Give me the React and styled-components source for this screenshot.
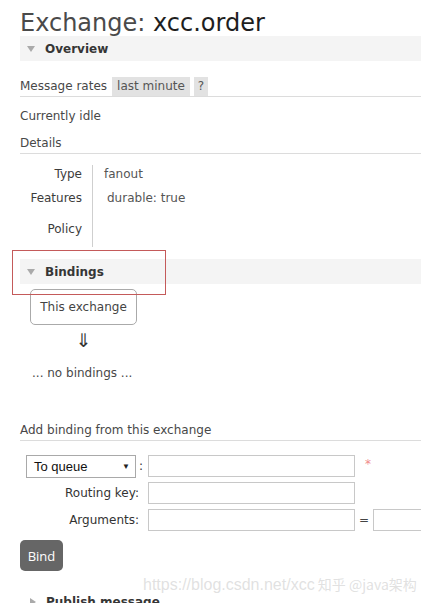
import React from "react"
import styled, { createGlobalStyle } from "styled-components"

const GlobalStyle = createGlobalStyle`
  html, body {
    margin: 0;
    padding: 0;
    background: #fff;
  }
  body {
    font-family: "DejaVu Sans", Verdana, sans-serif;
    font-size: 12px;
    color: #484848;
  }
  * {
    box-sizing: border-box;
  }
`

const App = () => {
  return (
    <>
      <GlobalStyle />
      <Page>
        <Title>
          <TitleLabel>Exchange:</TitleLabel> xcc.order
        </Title>

        <SectionHeader>
          <Triangle open />
          Overview
        </SectionHeader>

        <RatesRow>
          Message rates
          <Tag>last minute</Tag>
          <Tag narrow>?</Tag>
        </RatesRow>
        <Line>Currently idle</Line>
        <SubHeading>Details</SubHeading>

        <DetailsTable>
          <DetailRow $pad="1px 0 3px">
            <DetailLabel>Type</DetailLabel>
            <DetailValue>fanout</DetailValue>
          </DetailRow>
          <DetailRow $pad="5px 0 8px">
            <DetailLabel>Features</DetailLabel>
            <DetailValue $indent="14px">durable: true</DetailValue>
          </DetailRow>
          <DetailRow $pad="7px 0 10px">
            <DetailLabel>Policy</DetailLabel>
            <DetailValue />
          </DetailRow>
        </DetailsTable>

        <HighlightWrap>
          <SectionHeader>
            <Triangle open />
            Bindings
          </SectionHeader>
          <Highlight />
        </HighlightWrap>

        <ExchangeBox>This exchange</ExchangeBox>
        <Arrow>⇓</Arrow>
        <NoBindings>... no bindings ...</NoBindings>

        <SubHeading $top="37px">Add binding from this exchange</SubHeading>

        <Form>
          <FormRow>
            <FormLabel>
              <Select>
                To queue
                <SelectArrow>▼</SelectArrow>
              </Select>
              <Colon>:</Colon>
            </FormLabel>
            <Input />
            <Required>*</Required>
          </FormRow>
          <FormRow>
            <FormLabel>Routing key:</FormLabel>
            <Input />
          </FormRow>
          <FormRow>
            <FormLabel>Arguments:</FormLabel>
            <Input />
            <Equals>=</Equals>
            <Input $small />
          </FormRow>
        </Form>

        <BindButton>Bind</BindButton>

        <SectionHeader $top="18px" $plain>
          <Triangle />
          Publish message
        </SectionHeader>

        <Watermark>
          https://blog.csdn.net/xcc<WatermarkCjk> 知乎 @java架构</WatermarkCjk>
        </Watermark>
      </Page>
    </>
  )
}

export default App

const Page = styled.div`
  position: relative;
  height: 603px;
  overflow: hidden;
  padding-left: 20px;
`

const Title = styled.h1`
  margin: 0;
  padding-top: 10px;
  height: 36px;
  font-size: 24px;
  line-height: 26px;
  font-weight: normal;
  color: #1e1e1e;
  white-space: nowrap;
`

const TitleLabel = styled.span`
  color: #4a4a4a;
`

const SectionHeader = styled.div`
  display: flex;
  align-items: center;
  height: 25px;
  margin-top: ${(p) => p.$top || "0"};
  padding-left: 7px;
  background: ${(p) => (p.$plain ? "#fff" : "#f4f4f4")};
  font-weight: bold;
  color: #363636;
  white-space: nowrap;
`

const Triangle = styled.span`
  display: inline-block;
  width: 0;
  height: 0;
  margin-right: 10px;
  margin-left: ${(p) => (p.open ? "0" : "3px")};
  border-style: solid;
  border-color: transparent;
  ${(p) =>
    p.open
      ? `
    border-width: 6px 4px 0 4px;
    border-top-color: #aaa;
  `
      : `
    border-width: 4px 0 4px 6px;
    border-left-color: #aaa;
  `}
`

const RatesRow = styled.div`
  display: flex;
  align-items: stretch;
  margin-top: 16px;
  height: 20px;
  line-height: 19px;
  border-bottom: 1px solid #dcdcdc;
  white-space: nowrap;
`

const Tag = styled.span`
  margin-left: ${(p) => (p.narrow ? "4px" : "5px")};
  padding: 0 ${(p) => (p.narrow ? "4px" : "5px")};
  height: 19px;
  background: #e2e2e2;
  color: #555;
`

const Line = styled.div`
  margin-top: 9px;
  line-height: 20px;
`

const SubHeading = styled.div`
  margin-top: ${(p) => p.$top || "7px"};
  height: 21px;
  line-height: 20px;
  border-bottom: 1px solid #dcdcdc;
  white-space: nowrap;
`

const DetailsTable = styled.div`
  margin-top: 11px;
`

const DetailRow = styled.div`
  display: grid;
  grid-template-columns: 73px 1fr;
  line-height: 16px;

  & > * {
    padding: ${(p) => p.$pad};
  }
`

const DetailLabel = styled.div`
  padding-right: 10px !important;
  text-align: right;
  border-right: 1px solid #cfcfcf;
  color: #3c3c3c;
`

const DetailValue = styled.div`
  padding-left: ${(p) => p.$indent || "11px"} !important;
  color: #555;
`

const HighlightWrap = styled.div`
  position: relative;
  margin-top: 12px;
`

const Highlight = styled.div`
  position: absolute;
  left: -8px;
  top: -9px;
  width: 154px;
  height: 45px;
  border: 1px solid #c45a5a;
  pointer-events: none;
`

const ExchangeBox = styled.div`
  margin: 5px 0 0 10px;
  width: 107px;
  height: 36px;
  line-height: 34px;
  border: 1px solid #aaa;
  border-radius: 5px;
  text-align: center;
  color: #444;
`

const Arrow = styled.div`
  margin: 5px 0 0 10px;
  width: 107px;
  line-height: 20px;
  font-size: 19px;
  text-align: center;
  color: #333;
`

const NoBindings = styled.div`
  margin: 13px 0 0 12px;
  line-height: 20px;
`

const Form = styled.div`
  display: flex;
  flex-direction: column;
  gap: 5px;
  margin-top: 14px;
`

const FormRow = styled.div`
  display: flex;
  align-items: center;
  height: 22px;
  white-space: nowrap;
`

const FormLabel = styled.div`
  flex: none;
  display: flex;
  align-items: center;
  justify-content: flex-end;
  width: 128px;
  padding-right: 9px;
  color: #333;
`

const Select = styled.div`
  display: flex;
  align-items: center;
  justify-content: space-between;
  width: 110px;
  height: 23px;
  padding: 0 5px 0 7px;
  border: 1px solid #a9a9a9;
  font-family: "Liberation Sans", Arial, sans-serif;
  font-size: 13px;
  color: #111;
`

const SelectArrow = styled.span`
  font-size: 8px;
  color: #222;
`

const Colon = styled.span`
  margin-left: 3px;
  margin-right: -4px;
`

const Input = styled.div`
  flex: none;
  width: ${(p) => (p.$small ? "60px" : "207px")};
  height: 22px;
  border: 1px solid #c8c8c8;
  background: #fff;
`

const Required = styled.span`
  margin-left: 10px;
  margin-top: -4px;
  color: #f08a8a;
`

const Equals = styled.span`
  margin: 0 4px 0 4px;
  color: #444;
`

const BindButton = styled.button`
  display: block;
  margin-top: 9px;
  width: 43px;
  height: 31px;
  padding: 0;
  border: none;
  border-radius: 5px;
  background: #666;
  color: #fff;
  font-family: "Open Sans", sans-serif;
  font-size: 13px;
`

const Watermark = styled.div`
  position: absolute;
  left: 143px;
  top: 573px;
  font-family: "Liberation Sans", Arial, sans-serif;
  font-size: 16px;
  line-height: 22px;
  color: rgba(200, 200, 200, 0.55);
  white-space: nowrap;
  pointer-events: none;
`

const WatermarkCjk = styled.span`
  font-family: "Noto Sans CJK SC", sans-serif;
  font-size: 14px;
`
